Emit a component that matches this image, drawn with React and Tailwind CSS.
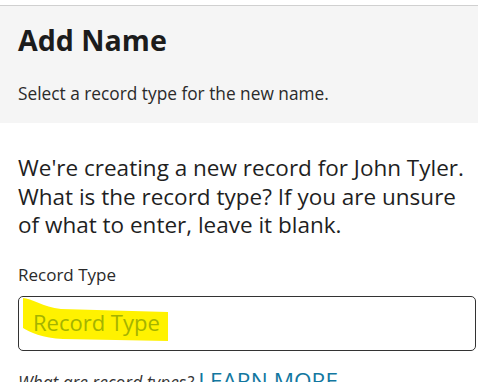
export default function App() {
  return (
    <div className="w-[478px] h-[382px] overflow-hidden bg-white text-[#1f1f1f]" style={{ fontFamily: '"Open Sans", "Noto Sans", sans-serif' }}>
      <div className="mt-[5px] border-t border-[#d0d0d0] bg-[#f5f5f5] h-[118px] pl-[18px] pt-[14px]">
        <h1 className="text-[28.6px] leading-[40px] font-bold text-[#1c1c1c]">Add Name</h1>
        <p className="mt-[22px] text-[17.3px] leading-[24px] text-[#2a2a2a]">Select a record type for the new name.</p>
      </div>
      <div className="pl-[18px] pr-[2px] pt-[31px]">
        <p className="text-[22.5px] leading-[28.5px] text-[#1f1f1f]">
          We're creating a new record for John Tyler. What is the record type? If you are unsure of what to enter, leave it blank.
        </p>
        <label className="block mt-[23px] text-[17px] leading-[24px] text-[#2a2a2a]">Record Type</label>
        <div className="relative mt-[9px] h-[55px] w-[458px] rounded-[5px] border border-[#333]">
          <svg className="absolute left-0 top-0" width="458" height="55" viewBox="18 295 458 55">
            <path d="M22,296 C30,296 42,305 60,307 L167,310 L167,339 L62,337 C42,336 28,330 22,326 Z" fill="#fff200" />
          </svg>
          <span className="absolute left-[14px] top-[10px] text-[22px] leading-[30px] text-[#a4b300]">Record Type</span>
        </div>
        <p className="mt-[15px] whitespace-nowrap leading-[30px]">
          <span className="italic text-[17.3px] text-[#333]">What are record types? </span>
          <span className="text-[22.6px] text-[#1277a0]">LEARN MORE</span>
        </p>
      </div>
    </div>
  );
}
